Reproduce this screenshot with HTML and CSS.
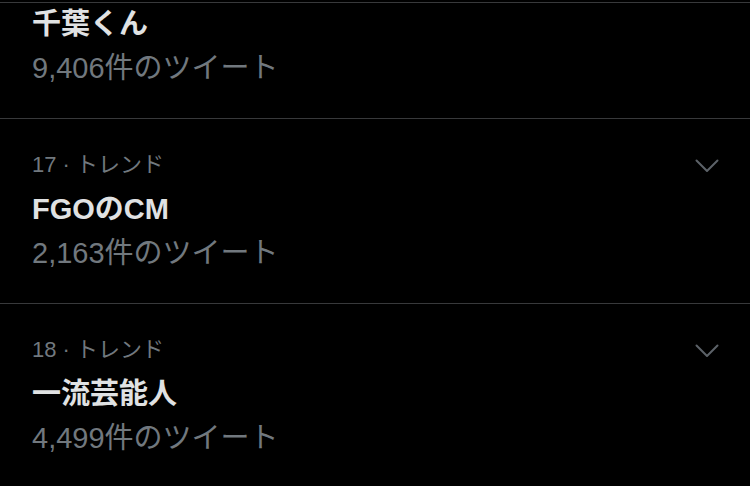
FILE: index.html
```html
<!DOCTYPE html>
<html lang="ja">
<head>
  <meta charset="UTF-8" />
  <meta name="viewport" content="width=device-width, initial-scale=1.0" />
  <title>トレンド</title>
  <link rel="stylesheet" href="styles.css">
</head>
<body>
  <div class="topbar"></div>

  <ul class="trends">
    <!-- first row is scrolled up, only its name and count are visible -->
    <li class="trend partial">
      <div class="trend-body">
        <div class="trend-name">千葉くん</div>
        <div class="trend-count">9,406件のツイート</div>
      </div>
    </li>
    <li class="trend">
      <div class="trend-body">
        <div class="trend-meta">17 · トレンド</div>
        <div class="trend-name">FGOのCM</div>
        <div class="trend-count">2,163件のツイート</div>
      </div>
      <svg class="more" width="24" height="24" viewBox="0 0 24 24"><path d="M1.5 6.5 L12 17 L22.5 6.5" /></svg>
    </li>
    <li class="trend">
      <div class="trend-body">
        <div class="trend-meta">18 · トレンド</div>
        <div class="trend-name">一流芸能人</div>
        <div class="trend-count">4,499件のツイート</div>
      </div>
      <svg class="more" width="24" height="24" viewBox="0 0 24 24"><path d="M1.5 6.5 L12 17 L22.5 6.5" /></svg>
    </li>
  </ul>
</body>
</html>
```

FILE: styles.css
```css
:root {
  --bg: #000000;
  --fg: #e0e2e3;
  --muted: #71787e;
  --line: #38393b;
}
body {
  margin: 0;
  padding: 0;
  background-color: var(--bg);
  color: var(--fg);
  font-family: 'Liberation Sans', 'Noto Sans CJK JP', sans-serif;
  overflow: hidden;
}
.topbar {
  height: 2px;
  border-bottom: 1px solid var(--line);
}
.trends {
  list-style: none;
  margin: 0;
  padding: 0;
}
.trend {
  display: flex;
  align-items: flex-start;
  padding: 24px 31px 28px 32px;
  border-bottom: 1px solid var(--line);
}
.trend.partial {
  padding-top: 0;
  margin-top: -1px;
}
.trend-body {
  flex: 1;
}
.trend-meta {
  font-size: 22px;
  line-height: 44px;
  color: var(--muted);
}
.trend-name {
  font-size: 29px;
  line-height: 44px;
  font-weight: 700;
}
.trend-count {
  font-size: 29px;
  line-height: 44px;
  color: var(--muted);
}
.more {
  margin-top: 11px;
  fill: none;
  stroke: #5c6268;
  stroke-width: 2;
  stroke-linecap: round;
  stroke-linejoin: round;
}
```
